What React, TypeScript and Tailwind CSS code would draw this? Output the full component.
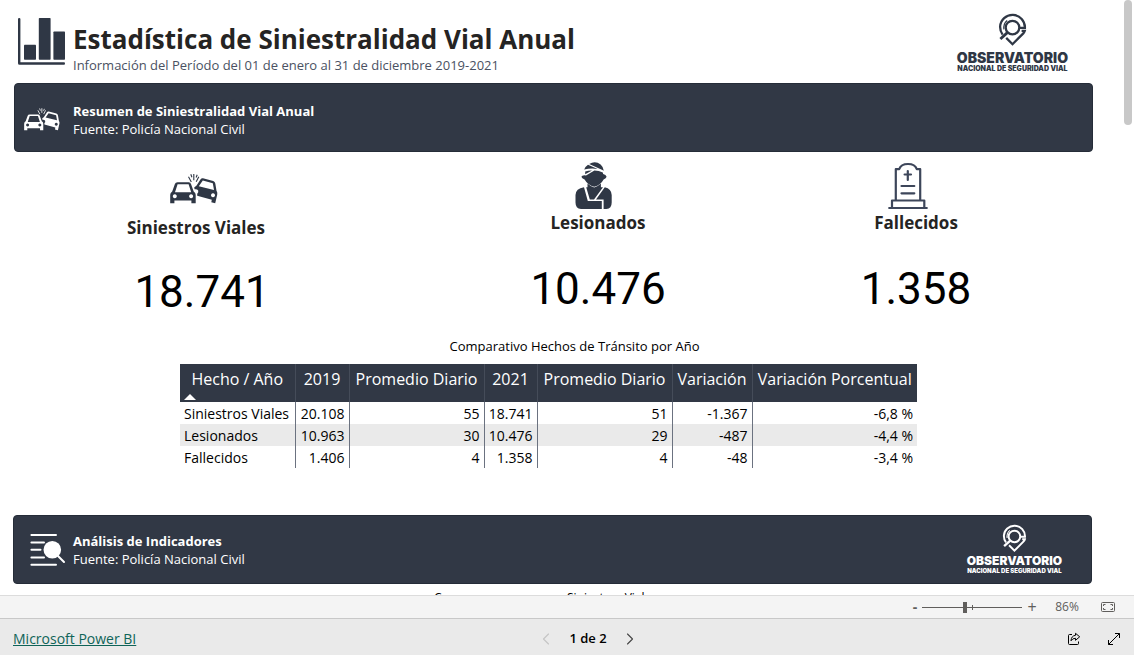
import { useState, type ReactNode } from "react";
import { ChevronLeft, ChevronRight } from "lucide-react";

interface IconProps {
  className?: string;
}

interface BannerProps {
  icon: ReactNode;
  title: string;
  className?: string;
  children?: ReactNode;
}

interface KpiProps {
  icon: ReactNode;
  label: string;
  value: string;
  valueClass?: string;
}

const columns = [
  { label: "Hecho / Año", width: "w-[115px]" },
  { label: "2019", width: "w-[54px]" },
  { label: "Promedio Diario", width: "w-[135px]" },
  { label: "2021", width: "w-[53px]" },
  { label: "Promedio Diario", width: "w-[135px]" },
  { label: "Variación", width: "w-[80px]" },
  { label: "Variación Porcentual", width: "w-[165px]" },
];

const rows = [
  ["Siniestros Viales", "20.108", "55", "18.741", "51", "-1.367", "-6,8 %"],
  ["Lesionados", "10.963", "30", "10.476", "29", "-487", "-4,4 %"],
  ["Fallecidos", "1.406", "4", "1.358", "4", "-48", "-3,4 %"],
];

const BarsIcon = () => (
  <svg viewBox="0 0 47 47" className="h-[47px] w-[47px] shrink-0 fill-[#2f3745]" aria-hidden="true">
    <path d="M0 1 Q0 0 1.2 0 Q2.4 0 2.4 1 V44.3 H46 Q47 44.3 47 45.5 Q47 46.7 46 46.7 H1.5 Q0 46.7 0 45.2z" />
    <rect x="6" y="26.7" width="12" height="15" rx="0.7" />
    <rect x="20.8" y="0" width="11.8" height="41.7" rx="0.7" />
    <rect x="35.4" y="13.5" width="11.6" height="28.2" rx="0.7" />
  </svg>
);

const CrashIcon = ({ className }: IconProps) => (
  <svg viewBox="0 0 48 30" className={className} fill="currentColor" aria-hidden="true">
    <path
      fillRule="evenodd"
      d="M7.5 8.3H18.8Q20.4 8.3 21 9.9L23.7 17.4Q25.7 18.6 25.7 20.8V29.3H21.4V26.6H4.4V29.3H0.2V20.8Q0.2 18.6 2.2 17.4L4.9 9.9Q5.5 8.3 7.5 8.3z M7.6 10.3L5 18.2H21.2L18.6 10.3z M4.8 20.3a2 2 0 1 0 .01 0z M21.1 20.3a2 2 0 1 0 .01 0z"
    />
    <path
      fillRule="evenodd"
      d="M33 4.3L43.2 7Q45 7.6 45.3 9.5L46.5 16.7Q47.8 18.5 47.2 20.7L45.2 29.2L41.3 28.2L41.8 25.8L27.2 21.7V19.8Q28.8 18.7 28.2 16.6Q27 14.8 24.6 15.3L24.2 13.6L26.6 11.6L30.6 5.3Q31.5 4 33 4.3z M32.8 6.5L28.8 12.2L44 16L42.8 9.2z M43 19.3a2 2 0 1 0 .01 0z"
    />
    <path
      d="M18.5 2.8L21.3 8M20.8 0.3L21.9 3.2M23.8 0V6.2M28.8 2.8L26.2 7.8M27.2 0.8L26.1 3.5"
      fill="none"
      stroke="currentColor"
      strokeWidth="1.1"
    />
  </svg>
);

const InjuredIcon = () => (
  <svg viewBox="0 0 37 48" className="mr-[9px] h-12 w-[37px] text-[#2f3745]" fill="currentColor" aria-hidden="true">
    <path d="M9.2 7.6Q10 4.8 13 2.8L22.6 7Q16 5.8 9.2 7.6z" />
    <path d="M14.2 1.9Q20.5-1.5 25.6 2.6Q28.2 4.8 28.8 8.8L27.4 8z" />
    <path d="M10.2 9.4Q13.6 8.4 17 8.5L10.2 12.2z" />
    <path d="M19.4 8.6Q24 8.8 27.8 10.6L28.2 12Q31 12.6 31.6 14.8Q31.2 16.6 28.6 17.4Q25.8 22.8 19.2 24.8Q12.6 22.8 9.6 17.4Q6.8 16.6 6.4 14.8Q7 12.8 11 13.4z" />
    <path d="M12.5 21.6Q16 25 19.2 25.4Q22.4 25 25.9 21.6V25.2H28L19 37.4H14.8L11.2 25.2H12.5z" />
    <path d="M9 25.2L12.8 39H26.8V47H6Q0.5 46.6 0.5 40.5V33Q0.7 26.4 9 25.2z" />
    <path d="M29.8 25.2Q36.5 26.8 36.7 33V40.5Q36.7 46.6 31.4 47H28.6V37.4H21z" />
  </svg>
);

const TombIcon = () => (
  <svg
    viewBox="0 0 40 48"
    className="mr-4 h-12 w-10 text-[#3d465a]"
    fill="none"
    stroke="currentColor"
    strokeWidth="2.2"
    strokeLinecap="round"
    strokeLinejoin="round"
    aria-hidden="true"
  >
    <path d="M1.2 46H38.8M4 46V38.5H36.3V46M7.8 38V7.2H11.2Q13 2 20 2Q27 2 28.8 7.2H32.2V38" />
    <path d="M19.8 9V18M16.6 12.5H23M13.5 24H26.3M13.5 31.3H26.3" />
  </svg>
);

const AnalysisIcon = () => (
  <svg viewBox="0 0 36 34" className="h-[34px] w-9 text-white" aria-hidden="true">
    <path
      d="M1.4 2H26M1.4 9.4H14M1.4 16.8H10.5M1.4 24.4H14M1.4 31.8H26M28 23L34 29"
      fill="none"
      stroke="currentColor"
      strokeWidth="2"
      strokeLinecap="round"
    />
    <circle cx="22.3" cy="16.8" r="8.8" fill="currentColor" />
  </svg>
);

const PinIcon = ({ className }: IconProps) => (
  <svg viewBox="0 0 32 34" className={className} fill="none" stroke="currentColor" strokeWidth="2.3" aria-hidden="true">
    <path d="M6.6 21.6Q4.1 18.4 4.1 13.8A12.4 12.4 0 0 1 28.9 14.9H23.6" />
    <circle cx="16.5" cy="14.6" r="6.8" />
    <path d="M11.6 19.4L4.4 26" strokeWidth="2.8" />
    <path d="M7.9 16.4Q7.2 10.4 11.2 7.4" strokeWidth="1.2" />
    <path d="M10.2 24.9L16.5 31.2L27.3 20.4Q28.5 19 28.8 17.8H25.6" />
  </svg>
);

const Banner = ({ icon, title, className = "", children }: BannerProps) => (
  <section className={`flex h-[69px] shrink-0 items-center rounded-sm border border-[#252c38] bg-[#313845] text-white ${className}`}>
    {icon}
    <div className="grow text-[13px] leading-[18px]">
      <h2 className="font-bold">{title}</h2>
      <p>Fuente: Policía Nacional Civil</p>
    </div>
    {children}
  </section>
);

const Kpi = ({ icon, label, value, valueClass = "mt-[30px]" }: KpiProps) => (
  <div className="flex flex-col items-center">
    {icon}
    <h3 className="mt-px text-[17px] leading-6 font-bold text-[#252423]">{label}</h3>
    <p className={`font-['Roboto',sans-serif] text-[44px] leading-[48px] text-black ${valueClass}`}>{value}</p>
  </div>
);

const FitIcon = () => (
  <svg viewBox="0 0 14 10" className="h-2.5 w-3.5" fill="none" stroke="currentColor" aria-hidden="true">
    <rect x="0.5" y="0.5" width="13" height="9" rx="1" />
    <path d="M2.5 4V2.5H4.5M9.5 2.5H11.5V4M11.5 6V7.5H9.5M4.5 7.5H2.5V6" />
  </svg>
);

const ShareIcon = () => (
  <svg viewBox="0 0 14 14" className="h-3.5 w-3.5" fill="none" stroke="currentColor" strokeLinejoin="round" aria-hidden="true">
    <path d="M5 2.5H2.5Q1.5 2.5 1.5 3.5V11.5Q1.5 12.5 2.5 12.5H10.5Q11.5 12.5 11.5 11.5V9.5" />
    <path d="M8.5 1.3L12.7 4.8L8.5 8.3V6.3Q5.5 6.2 4 8.8Q4.3 3.8 8.5 3.3z" />
  </svg>
);

const ExpandIcon = () => (
  <svg viewBox="0 0 14 14" className="h-3.5 w-3.5" fill="none" stroke="currentColor" aria-hidden="true">
    <path d="M1.5 12.5L12.5 1.5M8 1.5H12.5V6M1.5 8V12.5H6" />
  </svg>
);

function ComparisonTable() {
  return (
    <table className="mx-auto table-fixed border-collapse text-sm whitespace-nowrap text-black">
      <caption className="pb-1.5 pl-[52px] text-[13px] leading-6">Comparativo Hechos de Tránsito por Año</caption>
      <thead>
        <tr className="h-[38px] bg-[#313845] text-white">
          {columns.map((col, i) => (
            <th
              key={i}
              scope="col"
              aria-sort={i === 0 ? "ascending" : undefined}
              className={`${col.width} border-[#454c59] p-0 text-center align-top text-base leading-[30px] font-normal not-last:border-r`}
            >
              {col.label}
              {i === 0 && (
                <svg viewBox="0 0 12 6" className="ml-1 h-1.5 w-3 fill-white" aria-hidden="true">
                  <path d="M0 6L6 0L12 6z" />
                </svg>
              )}
            </th>
          ))}
        </tr>
      </thead>
      <tbody>
        {rows.map((row) => (
          <tr key={row[0]} className="even:bg-[#eaeaea]">
            {row.map((cell, i) => (
              <td
                key={i}
                className="border-[#6b7280] px-1 pt-0.5 text-right leading-5 not-last:border-r first:text-left"
              >
                {cell}
              </td>
            ))}
          </tr>
        ))}
      </tbody>
    </table>
  );
}

function ZoomBar() {
  const [zoom, setZoom] = useState(86);

  return (
    <div className="flex h-[23px] shrink-0 items-center justify-end border-t border-[#dcdcdc] bg-[#f4f4f4] pr-[19px] text-[#605e5c]">
      <button type="button" aria-label="Alejar" className="w-3.5 text-sm leading-4 font-bold" onClick={() => setZoom(zoom - 1)}>
        -
      </button>
      <div className="relative flex w-[100px] items-center">
        <input
          type="range"
          aria-label="Zoom"
          min={0}
          max={200}
          value={zoom}
          onChange={(e) => setZoom(Number(e.target.value))}
          className="h-3 w-full appearance-none bg-transparent [&::-webkit-slider-runnable-track]:h-px [&::-webkit-slider-runnable-track]:bg-[#605e5c] [&::-webkit-slider-thumb]:-mt-[5px] [&::-webkit-slider-thumb]:h-[11px] [&::-webkit-slider-thumb]:w-1 [&::-webkit-slider-thumb]:appearance-none [&::-webkit-slider-thumb]:bg-[#605e5c]"
        />
        <span className="absolute top-1 left-1/2 h-[5px] w-px bg-[#605e5c]" />
      </div>
      <button type="button" aria-label="Acercar" className="w-5 text-base leading-4" onClick={() => setZoom(zoom + 1)}>
        +
      </button>
      <span className="w-[50px] text-center text-xs">{zoom}%</span>
      <button type="button" aria-label="Ajustar a la página" className="ml-[9px]">
        <FitIcon />
      </button>
    </div>
  );
}

function Footer() {
  return (
    <footer className="grid h-[37px] shrink-0 grid-cols-3 items-center border-t border-[#c8c8c8] bg-[#eaeaea] px-[13px] pt-1 text-black">
      <a href="#" className="justify-self-start text-sm text-[#0f6458] underline">
        Microsoft Power BI
      </a>
      <nav className="ml-[42px] flex items-center justify-center gap-[15px]" aria-label="Páginas">
        <button type="button" aria-label="Página anterior" disabled className="text-[#c4c4c4]">
          <ChevronLeft size={20} strokeWidth={1.3} />
        </button>
        <span className="-mx-0.5 text-[13px] font-semibold">1 de 2</span>
        <button type="button" aria-label="Página siguiente" className="text-[#444]">
          <ChevronRight size={20} strokeWidth={1.3} />
        </button>
      </nav>
      <div className="flex items-center gap-[26px] justify-self-end">
        <button type="button" aria-label="Compartir">
          <ShareIcon />
        </button>
        <button type="button" aria-label="Pantalla completa">
          <ExpandIcon />
        </button>
      </div>
    </footer>
  );
}

export default function App() {
  return (
    <div className="flex h-screen flex-col bg-white font-['Open_Sans','Noto_Sans',sans-serif]">
      <main className="relative flex min-h-0 grow flex-col overflow-hidden">
        <header className="mr-[41px] ml-[18px] flex h-[83px] shrink-0 items-center">
          <BarsIcon />
          <div className="ml-2 grow pt-3.5">
            <h1 className="text-[26px] leading-8 font-bold whitespace-nowrap text-[#252423]">
              Estadística de Siniestralidad Vial Anual
            </h1>
            <p className="text-[13px] leading-5 text-[#4a5162]">
              Información del Período del 01 de enero al 31 de diciembre 2019-2021
            </p>
          </div>
          <div className="mr-[25px] flex flex-col items-center pt-0.5 font-['Inter',sans-serif] font-black text-[#2f3745]">
            <PinIcon className="h-[34px] w-8" />
            <span className="mt-1 text-sm leading-3.5">OBSERVATORIO</span>
            <span className="text-[7px] leading-2">NACIONAL DE SEGURIDAD VIAL</span>
          </div>
        </header>

        <Banner
          title="Resumen de Siniestralidad Vial Anual"
          icon={<CrashIcon className="mr-[13px] h-[23px] w-9" />}
          className="mr-[41px] ml-3.5 pt-1 pl-[9px]"
        />

        <section className="mr-[41px] ml-3.5 grid grid-cols-[364fr_440fr_196fr_79fr] pt-2.5">
          <Kpi
            icon={<CrashIcon className="mt-3 mr-1 mb-[11px] h-[30px] w-12 text-[#2f3745]" />}
            label="Siniestros Viales"
            value="18.741"
            valueClass="mt-7 pl-3"
          />
          <Kpi icon={<InjuredIcon />} label="Lesionados" value="10.476" />
          <Kpi icon={<TombIcon />} label="Fallecidos" value="1.358" />
        </section>

        <section className="mt-[18px] mr-[37px]">
          <ComparisonTable />
        </section>

        <Banner
          title="Análisis de Indicadores"
          icon={<AnalysisIcon />}
          className="mt-[47px] mr-[42px] ml-[13px] gap-[7px] pl-4"
        >
          <div className="mr-[29px] flex flex-col items-center font-['Inter',sans-serif] font-black">
            <PinIcon className="h-[29px] w-7" />
            <span className="mt-0.5 text-xs leading-3">OBSERVATORIO</span>
            <span className="text-[6px] leading-2">NACIONAL DE SEGURIDAD VIAL</span>
          </div>
        </Banner>

        <div className="mt-1 grid grid-cols-[434fr_133fr_567fr] text-xs leading-5 text-black">
          <span className="col-start-2">C</span>
          <span>Siniestros Viales</span>
        </div>

        <div className="absolute top-0 right-0.5 h-[125px] w-2 rounded-full bg-[#c8c8c8]" />
      </main>
      <ZoomBar />
      <Footer />
    </div>
  );
}
